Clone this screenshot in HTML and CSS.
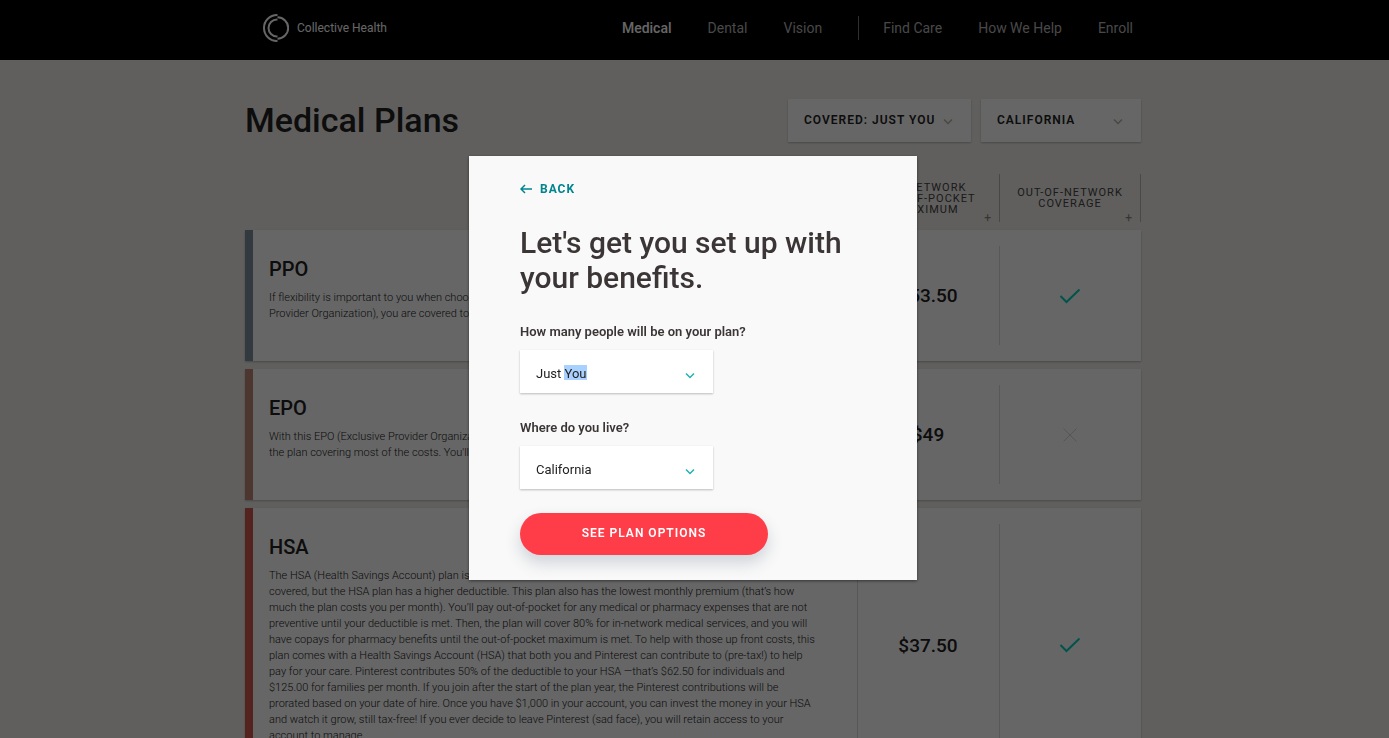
FILE: index.html
```html
<!DOCTYPE html>
<html lang="en">
  <head>
    <meta charset="UTF-8">
    <meta name="viewport" content="width=device-width, initial-scale=1.0">
    <title>Medical Plans - Collective Health</title>
    <link rel="stylesheet" href="styles.css">
  </head>
  <body>
    <header class="site-header">
      <div class="container header-inner">
        <a class="logo" href="#">
          <svg width="26" height="28" viewBox="0 0 26 28" fill="none" stroke="#fff" stroke-width="2">
            <path d="M14.5 1H14A13 13 0 0 0 14 27h.5"/>
            <path d="M14.5 5.500H14A8.500 8.500 0 0 0 14 22.500h.5"/>
            <path d="M14.500 3.300a10.700 10.700 0 0 1 0 21.400"/>
          </svg>
          <span>Collective Health</span>
        </a>
        <nav class="nav">
          <a class="active" href="#">Medical</a>
          <a href="#">Dental</a>
          <a href="#">Vision</a>
          <span class="separator"></span>
          <a href="#">Find Care</a>
          <a href="#">How We Help</a>
          <a href="#">Enroll</a>
        </nav>
      </div>
    </header>

    <main class="page">
      <div class="container">
        <div class="title-row">
          <h1>Medical Plans</h1>
          <div class="filters">
            <div class="select-box covered">
              <select aria-label="Covered">
                <option>COVERED: JUST YOU</option>
                <option>COVERED: YOU + SPOUSE</option>
              </select>
              <svg class="chevron" width="10" height="8" viewBox="0 0 10 8"><path d="M1 1.500l4 4 4-4"/></svg>
            </div>
            <div class="select-box state">
              <select aria-label="State">
                <option>CALIFORNIA</option>
                <option>NEW YORK</option>
              </select>
              <svg class="chevron" width="10" height="8" viewBox="0 0 10 8"><path d="M1 1.500l4 4 4-4"/></svg>
            </div>
          </div>
        </div>

        <table class="plans">
          <thead>
            <tr>
              <th class="col-plan"></th>
              <th class="col-value">In-Network<br>Out-of-Pocket<br>Maximum<span class="plus">+</span></th>
              <th class="col-value last">Out-of-Network<br>Coverage<span class="plus">+</span></th>
            </tr>
          </thead>
          <tbody>
            <tr>
              <td class="plan ppo">
                <h2>PPO</h2>
                <p>If flexibility is important to you when choosing a doctor, this plan is for you. With a PPO (Preferred<br>
                Provider Organization), you are covered to see any doctor you like.</p>
              </td>
              <td class="value">$53.50</td>
              <td class="value">
                <svg class="check" width="22" height="16" viewBox="0 0 22 16"><path d="M1.500 8l6 6L20.500 1.500"/></svg>
              </td>
            </tr>
            <tr>
              <td class="plan epo">
                <h2>EPO</h2>
                <p>With this EPO (Exclusive Provider Organization), you stay inside the network, with<br>
                the plan covering most of the costs. You'll pay a copay for each visit.</p>
              </td>
              <td class="value">$49</td>
              <td class="value">
                <svg class="cross" width="16" height="16" viewBox="0 0 16 16"><path d="M1.500 1.500l13 13M14.500 1.500l-13 13"/></svg>
              </td>
            </tr>
            <tr>
              <td class="plan hsa">
                <h2>HSA</h2>
                <p>The HSA (Health Savings Account) plan is similar to the PPO in how services are<br>
                covered, but the HSA plan has a higher deductible. This plan also has the lowest monthly premium (that’s how<br>
                much the plan costs you per month). You’ll pay out-of-pocket for any medical or pharmacy expenses that are not<br>
                preventive until your deductible is met. Then, the plan will cover 80% for in-network medical services, and you will<br>
                have copays for pharmacy benefits until the out-of-pocket maximum is met. To help with those up front costs, this<br>
                plan comes with a Health Savings Account (HSA) that both you and Pinterest can contribute to (pre-tax!) to help<br>
                pay for your care. Pinterest contributes 50% of the deductible to your HSA —that’s $62.50 for individuals and<br>
                $125.00 for families per month. If you join after the start of the plan year, the Pinterest contributions will be<br>
                prorated based on your date of hire. Once you have $1,000 in your account, you can invest the money in your HSA<br>
                and watch it grow, still tax-free! If you ever decide to leave Pinterest (sad face), you will retain access to your<br>
                account to manage.</p>
              </td>
              <td class="value">$37.50</td>
              <td class="value">
                <svg class="check" width="22" height="16" viewBox="0 0 22 16"><path d="M1.500 8l6 6L20.500 1.500"/></svg>
              </td>
            </tr>
          </tbody>
        </table>
      </div>
    </main>

    <div class="overlay">
      <form class="modal" role="dialog" aria-labelledby="modal-title">
        <button class="back" type="button">
          <svg width="12" height="10" viewBox="0 0 12 10"><path d="M12 5H1M5 1L1 5l4 4"/></svg>
          BACK
        </button>
        <h2 id="modal-title">Let's get you set up with your benefits.</h2>

        <label for="people">How many people will be on your plan?</label>
        <div class="select-box">
          <select id="people" class="selected-text">
            <option>Just You</option>
            <option>You + Spouse</option>
          </select>
          <svg class="chevron" width="10" height="8" viewBox="0 0 10 8"><path d="M1 1.500l4 4 4-4"/></svg>
        </div>

        <label for="live">Where do you live?</label>
        <div class="select-box">
          <select id="live">
            <option>California</option>
            <option>New York</option>
          </select>
          <svg class="chevron" width="10" height="8" viewBox="0 0 10 8"><path d="M1 1.500l4 4 4-4"/></svg>
        </div>

        <button class="submit" type="button">SEE PLAN OPTIONS</button>
      </form>
    </div>
  </body>
</html>
```
FILE: styles.css
```css
* {
    box-sizing: border-box;
}

body {
    margin: 0;
    height: 100vh;
    overflow: hidden;
    font-family: Roboto, Arial, sans-serif;
    background-color: #efeee9;
    color: #222;
}

h1, h2, p {
    margin: 0;
}

.site-header, .page, .overlay {
    padding-right: 3px;
}

.container {
    max-width: 896px;
    margin: 0 auto;
}

/* Header */
.site-header {
    background-color: #000;
}

.header-inner {
    display: flex;
    justify-content: space-between;
    align-items: center;
    height: 60px;
    padding: 0 8px 4px 18px;
}

.logo {
    display: flex;
    align-items: center;
    gap: 8px;
    color: #fff;
    font-size: 12px;
    text-decoration: none;
}

.nav {
    display: flex;
    align-items: center;
    gap: 36px;
}

.nav a {
    color: #b5b5b5;
    font-size: 14px;
    text-decoration: none;
}

.nav a.active {
    color: #fff;
    font-weight: 500;
}

.separator {
    width: 1px;
    height: 24px;
    margin-right: -12px;
    background-color: #777;
}

/* Title and filters */
.title-row {
    display: flex;
    justify-content: space-between;
    align-items: center;
    padding: 39px 0 24px;
}

h1 {
    padding-bottom: 2px;
    font-size: 34px;
    font-weight: 500;
}

.filters {
    display: flex;
    gap: 10px;
}

.select-box {
    display: grid;
    align-items: center;
    width: 193px;
    height: 43px;
    background-color: #fff;
    box-shadow: 0 1px 2px rgba(0, 0, 0, 0.25);
}

.select-box select, .select-box .chevron {
    grid-area: 1 / 1;
}

.select-box select {
    appearance: none;
    width: 100%;
    height: 100%;
    padding: 3px 16px 0;
    border: 0;
    background-color: transparent;
    color: #222;
    font-family: inherit;
    font-size: 13px;
}

.chevron {
    justify-self: end;
    margin: 8px 18px 0 0;
    fill: none;
    stroke: #22b0b4;
    stroke-width: 1.5;
    pointer-events: none;
}

.filters select {
    padding: 0 16px 2px;
    font-size: 12px;
    font-weight: 600;
    letter-spacing: 1px;
}

.filters .chevron {
    margin-top: 2px;
    stroke: #b8b3a3;
}

.covered {
    width: 183px;
}

.state {
    width: 160px;
}

/* Plans table */
.plans {
    width: 100%;
    border-spacing: 0 8px;
    table-layout: fixed;
}

.plans th, .plans td {
    padding: 0;
}

.plans th {
    position: relative;
    height: 48px;
    color: #444;
    font-size: 11px;
    font-weight: 400;
    line-height: 11px;
    letter-spacing: 1px;
    text-transform: uppercase;
}

.col-value {
    width: 142px;
    border-left: 1px solid #b5b5b5;
}

.col-value.last {
    border-right: 1px solid #b5b5b5;
}

.plus {
    position: absolute;
    right: 7px;
    bottom: -2px;
    color: #8a8672;
    font-size: 12px;
}

.plans tbody tr {
    height: 131px;
    background-color: #fff;
    box-shadow: 0 1px 2px rgba(0, 0, 0, 0.25);
}

.plan {
    border-left: 8px solid;
    vertical-align: top;
}

.plans .plan {
    padding: 27px 16px 38px;
}

.ppo {
    border-color: #80919e;
}

.epo {
    border-color: #c08478;
}

.hsa {
    border-color: #d5584e;
}

.plan h2 {
    font-size: 20px;
    font-weight: 500;
    line-height: 24px;
}

.plan p {
    padding-top: 9px;
    color: #222;
    font-size: 11px;
    font-weight: 300;
    line-height: 16px;
    white-space: nowrap;
}

.value {
    background: linear-gradient(#ddd, #ddd) left center / 1px calc(100% - 32px) no-repeat;
    font-size: 19px;
    font-weight: 500;
    text-align: center;
}

.value svg {
    display: block;
    margin: 0 auto;
    fill: none;
}

.check {
    stroke: #00d2bb;
    stroke-width: 2;
}

.cross {
    stroke: #d8d8d8;
}

/* Modal */
.overlay {
    position: fixed;
    inset: 0;
    display: flex;
    justify-content: center;
    align-items: center;
    padding-bottom: 2px;
    background-color: rgba(0, 0, 0, 0.6);
}

.modal {
    width: 448px;
    padding: 25px 51px;
    background-color: #f9f9f9;
    box-shadow: 0 1px 3px rgba(0, 0, 0, 0.5);
    color: #3b3536;
}

.back {
    display: flex;
    align-items: center;
    gap: 8px;
    padding: 0;
    border: 0;
    background: none;
    color: #00848e;
    font-family: inherit;
    font-size: 12px;
    font-weight: 700;
    line-height: 16px;
    letter-spacing: 1px;
    cursor: pointer;
}

.back svg {
    fill: none;
    stroke: #00848e;
    stroke-width: 1.5;
}

.modal h2 {
    margin: 28px 0 29px;
    font-size: 30px;
    font-weight: 500;
    line-height: 35px;
}

.modal label {
    display: block;
    margin-bottom: 10px;
    font-size: 13px;
    font-weight: 600;
    line-height: 16px;
}

.modal .select-box {
    margin-bottom: 27px;
}

/* "You" is shown as selected text */
.modal .selected-text {
    background: linear-gradient(#a9d1ff, #a9d1ff) 44px 15px / 23px 15px no-repeat;
}

.submit {
    display: block;
    width: 248px;
    height: 42px;
    margin-top: -3px;
    padding-bottom: 3px;
    border: 0;
    border-radius: 21px;
    background-color: #ff3d49;
    box-shadow: 0 8px 16px rgba(40, 60, 90, 0.2);
    color: #fff;
    font-family: inherit;
    font-size: 12px;
    font-weight: 600;
    letter-spacing: 1px;
    cursor: pointer;
}
```
